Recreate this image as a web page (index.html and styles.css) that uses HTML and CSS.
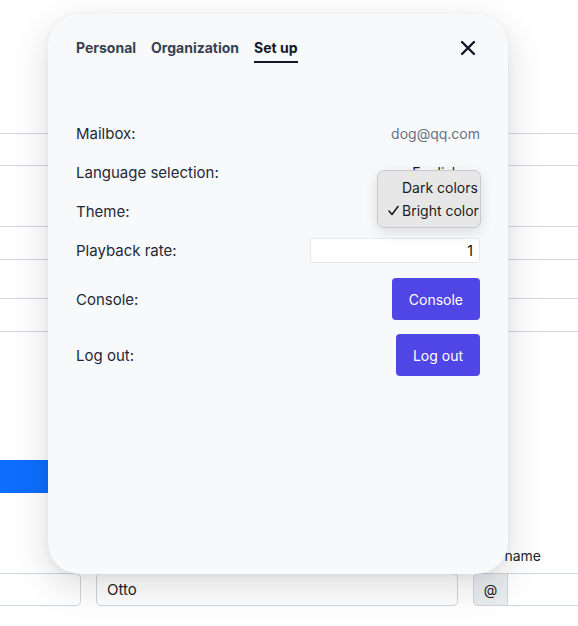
FILE: index.html
```html
<!DOCTYPE html>
<html>
<head>
<meta charset="utf-8">
<link rel="stylesheet" href="styles.css">
</head>
<body>
<div class="page">
  <div class="lines">
    <div class="line h32"></div>
    <div class="line h61"></div>
    <div class="line h33"></div>
    <div class="line h39"></div>
    <div class="line h33"></div>
    <div class="line h0"></div>
  </div>
  <div class="blue-btn"></div>
  <div class="form">
    <div class="field"><div class="label">&nbsp;</div><div class="input"></div></div>
    <div class="field"><div class="label">&nbsp;</div><div class="input">Otto</div></div>
    <div class="field"><div class="label">Username</div>
      <div class="group"><span class="addon">@</span><span class="input grow"></span></div>
    </div>
  </div>
</div>

<div class="modal">
  <div class="header">
    <nav class="tabs">
      <span class="tab">Personal</span>
      <span class="tab">Organization</span>
      <span class="tab active">Set up</span>
    </nav>
    <svg class="close" width="16" height="16" viewBox="0 0 16 16"><path d="M2 2L14 14M14 2L2 14" stroke="#111827" stroke-width="2.4" stroke-linecap="round"/></svg>
  </div>
  <div class="settings">
    <div class="row"><span>Mailbox:</span><span class="muted">dog@qq.com</span></div>
    <div class="row"><span>Language selection:</span><span class="select">English</span></div>
    <div class="row"><span>Theme:</span><span></span></div>
    <div class="row"><span>Playback rate:</span><span class="rate">1</span></div>
    <div class="row btnrow first"><span>Console:</span><button class="btn">Console</button></div>
    <div class="row btnrow"><span>Log out:</span><button class="btn">Log out</button></div>
    <div class="menu">
      <div class="opt"><span class="check"></span>Dark colors</div>
      <div class="opt"><span class="check"><svg width="11" height="11" viewBox="0 0 11 11"><path d="M1 6L4 9.5L10 1.5" fill="none" stroke="#1c1c1e" stroke-width="1.6" stroke-linecap="round" stroke-linejoin="round"/></svg></span>Bright color</div>
    </div>
  </div>
</div>
</body>
</html>
```
FILE: styles.css
```css
html, body { margin: 0; padding: 0; }
body {
  width: 578px; height: 626px; overflow: hidden; background: #fff;
  font-family: Inter, "Noto Sans", sans-serif; color: #212529; position: relative;
}
.page { padding-top: 133px; }
.line { border-top: 1px solid #d2d5da; }
.h32 { height: 31px; } .h61 { height: 60px; } .h33 { height: 32px; } .h39 { height: 38px; } .h0 { height: 0; }
.blue-btn { margin-top: 128px; width: 120px; height: 33px; background: #0d6efd; border-radius: 0 6px 6px 0; }
.form { margin-top: 52px; display: grid; grid-template-columns: 81px 362px 1fr; column-gap: 15px; }
.label { font-size: 14px; line-height: 22px; height: 22px; margin-bottom: 6px; color: #212529; }
.input { box-sizing: border-box; height: 33px; border: 1px solid #ced4da; border-radius: 5px; font-size: 15px; line-height: 31px; padding-left: 10px; background: #fff; }
.field:first-child .input { border-left: none; border-radius: 0 5px 5px 0; }
.group { display: flex; }
.addon { box-sizing: border-box; width: 35px; height: 33px; border: 1px solid #ced4da; border-radius: 5px 0 0 5px; background: #e9ecef; font-size: 14px; line-height: 31px; text-align: center; }
.grow { flex: 1; border-left: none; border-right: none; border-radius: 0; }

.modal {
  position: absolute; left: 48px; top: 14px; width: 460px; height: 560px; box-sizing: border-box;
  background: #f8f9fb; border-radius: 32px; padding: 24px 28px 0;
  box-shadow: 0 12px 40px rgba(0,0,0,0.14), 0 2px 8px rgba(0,0,0,0.05);
}
.header { display: flex; justify-content: space-between; align-items: flex-start; }
.tabs { display: flex; gap: 15px; }
.tab { font-size: 14px; font-weight: 700; color: #374151; line-height: 20px; padding-bottom: 3px; border-bottom: 2px solid transparent; }
.tab.active { color: #111827; border-bottom-color: #111827; }
.close { margin-top: 2px; margin-right: 4px; }
.settings { margin-top: 51px; position: relative; font-size: 15px; color: #1f2937; }
.row { display: flex; justify-content: space-between; align-items: center; height: 39px; }
.muted { color: #6b7280; font-size: 14px; }
.select { font-size: 14px; padding-right: 20px; color: #111827; }
.rate { box-sizing: border-box; width: 170px; height: 25px; border: 1px solid #e5e7eb; background: #fff; border-radius: 2px; text-align: right; padding-right: 6px; font-size: 14px; line-height: 23px; color: #111; }
.btnrow { height: 42px; }
.btnrow.first { margin-top: 8px; }
.btnrow + .btnrow { margin-top: 14px; }
.btn { font-family: inherit; font-size: 14px; color: #fff; background: #4f46e5; border: none; border-radius: 4px; height: 42px; padding: 0 17px; }
.menu {
  position: absolute; left: 301px; top: 56px; width: 104px; box-sizing: border-box; padding: 5px 0 5px;
  background: #e7e7e8; border: 1px solid #c9c9cb; border-radius: 7px;
  box-shadow: 0 4px 14px rgba(0,0,0,0.12);
  font-size: 14px; color: #1c1c1e;
}
.opt { display: flex; align-items: center; height: 23px; }
.check { width: 24px; display: flex; justify-content: flex-end; padding-right: 3px; box-sizing: border-box; }
```
